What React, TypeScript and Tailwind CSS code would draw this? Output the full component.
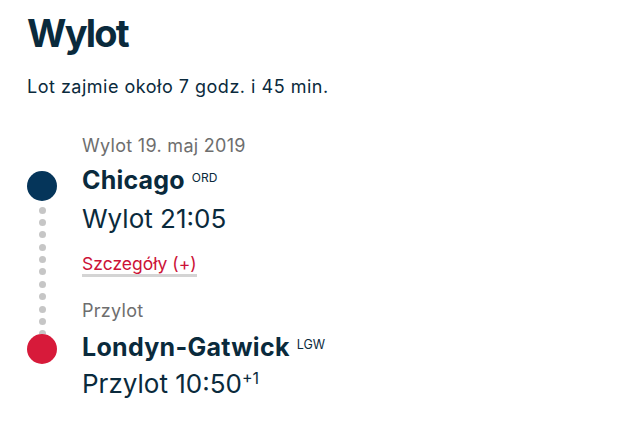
import React from "react";

export default function App() {
  const dots = Array.from({ length: 11 });
  return (
    <div
      className="w-[641px] h-[423px] bg-white pl-[27px] pt-[11px] text-[#0a2a3c]"
      style={{ fontFamily: "Inter, 'Open Sans', sans-serif" }}
    >
      <h1 className="text-[38px] font-bold leading-[44px] tracking-[-1.8px] text-[#0a2a3c]">Wylot</h1>
      <p className="mt-[20px] text-[18px] leading-[24px] tracking-[0.5px]">Lot zajmie około 7 godz. i 45 min.</p>
      <div className="mt-[35px] flex gap-[25px]">
        <div className="flex w-[30px] flex-col items-center pt-[37px]">
          <div className="h-[30px] w-[30px] shrink-0 rounded-full bg-[#05355a]" />
          <div className="flex h-[133px] shrink-0 flex-col items-center gap-[5.4px] overflow-hidden pt-[5.5px]">
            {dots.map((_, i) => (
              <div key={i} className="h-[7px] w-[7px] shrink-0 rounded-full bg-[#c6c6c6]" />
            ))}
          </div>
          <div className="h-[30px] w-[30px] shrink-0 rounded-full bg-[#d71a3a]" />
        </div>
        <div className="flex flex-col">
          <div className="text-[18px] leading-[24px] tracking-[0.3px] text-[#6e6e6e]">Wylot 19. maj 2019</div>
          <div className="mt-[6.4px] flex items-start text-[25px] font-bold leading-[32px] tracking-[0.2px]">
            <span>Chicago</span>
            <span className="ml-[7px] mt-[8px] text-[12px] font-normal leading-[12px] tracking-normal">ORD</span>
          </div>
          <div className="mt-[6.6px] text-[26px] leading-[32px] tracking-[0px]">Wylot 21:05</div>
          <div className="mt-[17.4px] leading-[24px]">
            <span className="border-b-[3px] border-[#d4d4d4] text-[17.5px] leading-[24px] text-[#cc1237]">
              Szczegóły (+)
            </span>
          </div>
          <div className="mt-[22.6px] text-[18px] leading-[24px] tracking-[0.3px] text-[#6e6e6e]">Przylot</div>
          <div className="mt-[7.8px] flex items-start text-[25px] font-bold leading-[32px] tracking-[0.3px]">
            <span>Londyn-Gatwick</span>
            <span className="ml-[7px] mt-[8px] text-[12.5px] font-normal leading-[12px] tracking-normal">LGW</span>
          </div>
          <div className="mt-[5.2px] flex items-start text-[26px] leading-[32px]">
            <span>Przylot 10:50</span>
            <span className="mt-[2.5px] text-[16px] leading-[16px]">+1</span>
          </div>
        </div>
      </div>
    </div>
  );
}
